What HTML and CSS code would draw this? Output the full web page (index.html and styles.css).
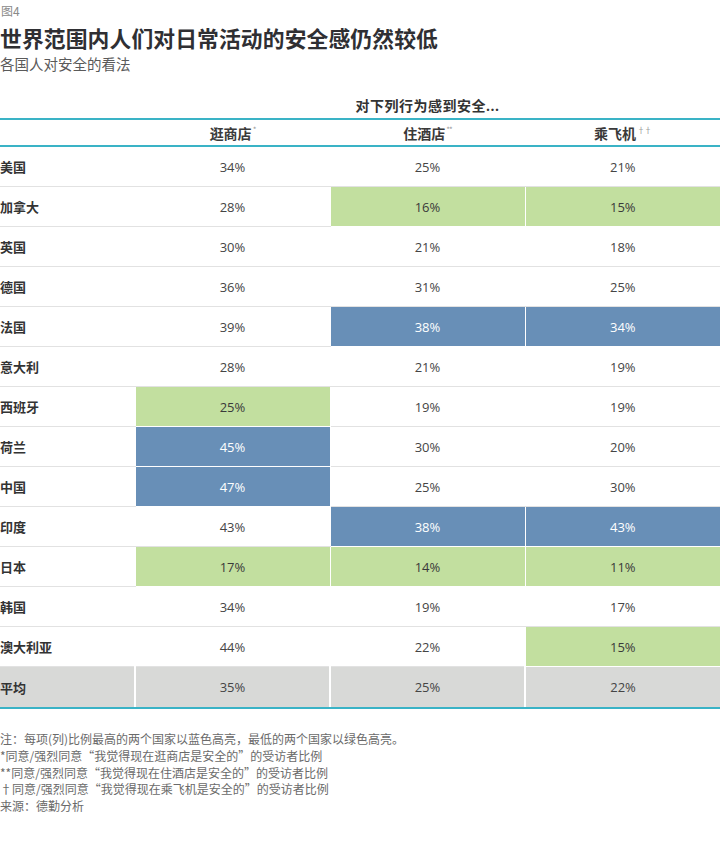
FILE: index.html
```html
<!DOCTYPE html>
<html lang="zh">
<head>
<meta charset="utf-8">
<link rel="stylesheet" href="styles.css">
</head>
<body>
<div class="page">
  <div class="fig">图4</div>
  <h1 class="title">世界范围内人们对日常活动的安全感仍然较低</h1>
  <div class="subtitle">各国人对安全的看法</div>
  <table class="data">
    <colgroup><col class="c0"><col class="c1"><col class="c2"><col class="c3"></colgroup>
    <thead>
      <tr class="group"><th></th><th colspan="3">对下列行为感到安全...</th></tr>
      <tr class="heads"><th></th><th>逛商店<sup>*</sup></th><th>住酒店<sup>**</sup></th><th>乘飞机<sup>††</sup></th></tr>
    </thead>
    <tbody>
      <tr><th>美国</th><td>34%</td><td>25%</td><td>21%</td></tr>
      <tr><th>加拿大</th><td>28%</td><td class="lo">16%</td><td class="lo">15%</td></tr>
      <tr><th>英国</th><td>30%</td><td>21%</td><td>18%</td></tr>
      <tr><th>德国</th><td>36%</td><td>31%</td><td>25%</td></tr>
      <tr><th>法国</th><td>39%</td><td class="hi">38%</td><td class="hi">34%</td></tr>
      <tr><th>意大利</th><td>28%</td><td>21%</td><td>19%</td></tr>
      <tr><th>西班牙</th><td class="lo">25%</td><td>19%</td><td>19%</td></tr>
      <tr><th>荷兰</th><td class="hi">45%</td><td>30%</td><td>20%</td></tr>
      <tr><th>中国</th><td class="hi">47%</td><td>25%</td><td>30%</td></tr>
      <tr><th>印度</th><td>43%</td><td class="hi">38%</td><td class="hi">43%</td></tr>
      <tr><th>日本</th><td class="lo">17%</td><td class="lo">14%</td><td class="lo">11%</td></tr>
      <tr><th>韩国</th><td>34%</td><td>19%</td><td>17%</td></tr>
      <tr><th>澳大利亚</th><td>44%</td><td>22%</td><td class="lo">15%</td></tr>
      <tr class="avg"><th>平均</th><td>35%</td><td>25%</td><td>22%</td></tr>
    </tbody>
  </table>
  <div class="notes">
    <p>注：每项(列)比例最高的两个国家以蓝色高亮，最低的两个国家以绿色高亮。</p>
    <p>*同意/强烈同意“我觉得现在逛商店是安全的”的受访者比例</p>
    <p>**同意/强烈同意“我觉得现在住酒店是安全的”的受访者比例</p>
    <p>†同意/强烈同意“我觉得现在乘飞机是安全的”的受访者比例</p>
    <p>来源：德勤分析</p>
  </div>
</div>
</body>
</html>
```

FILE: styles.css
```css
html, body {
  margin: 0;
  padding: 0;
  background: #fff;
}
body {
  font-family: "Open Sans", "Noto Sans CJK SC", sans-serif;
  color: #444;
}
.page {
  width: 720px;
}
.fig {
  font-family: "Noto Sans CJK SC", sans-serif;
  font-size: 12px;
  line-height: 14px;
  color: #8a8a8a;
  padding-top: 4px;
  padding-left: 1px;
}
.title {
  margin: 6px 0 0;
  font-family: "Noto Sans CJK SC", sans-serif;
  font-size: 21.8px;
  line-height: 28px;
  font-weight: 700;
  color: #2f2f33;
  letter-spacing: 0.1px;
}
.subtitle {
  font-family: "Noto Sans CJK SC", sans-serif;
  font-size: 14.5px;
  line-height: 20px;
  color: #5a5a5a;
  margin-top: 2px;
}
.data {
  margin-top: 17px;
  width: 720px;
  border-collapse: collapse;
  table-layout: fixed;
}
.c0 { width: 135px; }
.c1 { width: 195px; }
.c2 { width: 195px; }
.c3 { width: 195px; }
.data th, .data td {
  padding: 0;
}
.group th {
  height: 27px;
  font-family: "Open Sans", "Noto Sans CJK SC", sans-serif;
  font-size: 14px;
  font-weight: 700;
  color: #333;
  text-align: center;
  vertical-align: middle;
  border-bottom: 2px solid #3ab3c6;
  letter-spacing: 0.5px;
}
.heads th {
  height: 25px;
  font-family: "Noto Sans CJK SC", sans-serif;
  font-size: 14px;
  font-weight: 700;
  color: #3a3a3a;
  text-align: center;
  vertical-align: middle;
  border-bottom: 2px solid #3ab3c6;
}
.heads sup {
  font-size: 8px;
  font-weight: 400;
  color: #999;
  vertical-align: 6px;
  line-height: 0;
  margin-left: 1px;
  letter-spacing: -1px;
}
tbody th {
  height: 39px;
  text-align: left;
  padding-left: 2px;
  font-family: "Noto Sans CJK SC", sans-serif;
  font-size: 13px;
  font-weight: 700;
  color: #333;
  border-bottom: 1px solid #e2e2e2;
}
tbody td {
  height: 39px;
  text-align: center;
  font-family: "Open Sans", sans-serif;
  font-size: 13px;
  color: #454545;
  border-bottom: 1px solid #e2e2e2;
  border-left: 1px solid #fff;
}
tbody td.hi {
  background: #688fb7;
  color: #fff;
  border-bottom-color: #fff;
}
tbody td.lo {
  background: #c2df9f;
  color: #3a3a3a;
  border-bottom-color: #fff;
}
tbody tr.avg th, tbody tr.avg td {
  height: 40px;
  background: #d8d9d7;
  border-bottom: 2px solid #3ab3c6;
}
tbody tr.avg td {
  border-left: 2px solid #fff;
}
.notes {
  margin-top: 22px;
  font-family: "Noto Sans CJK SC", sans-serif;
  font-size: 12px;
  line-height: 16.8px;
  color: #6a6a6a;
}
.notes p {
  margin: 0;
}
```
